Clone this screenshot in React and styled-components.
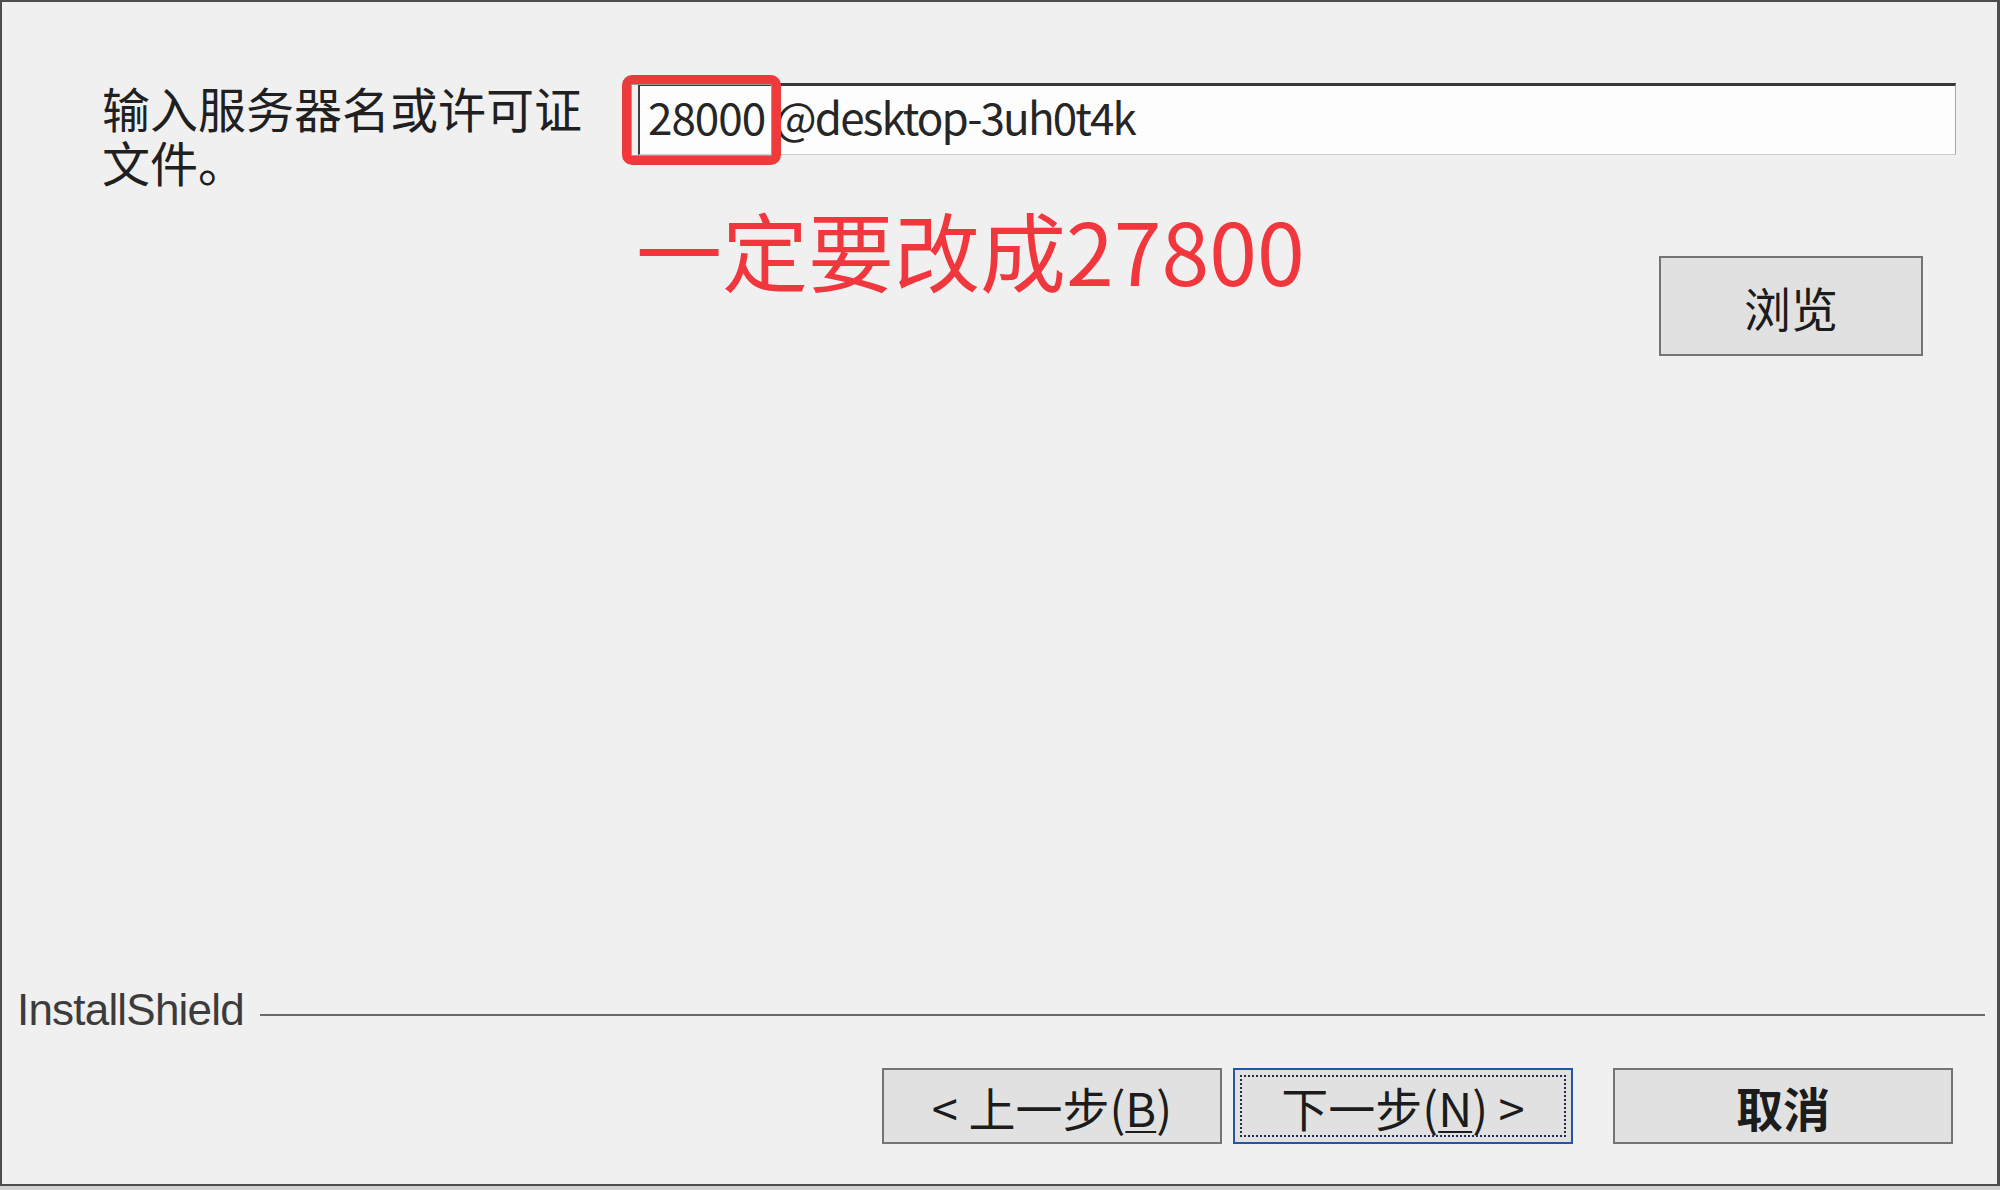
import React from "react";
import styled, { createGlobalStyle } from "styled-components";

const GlobalStyle = createGlobalStyle`
  html, body {
    margin: 0;
    padding: 0;
    background: #d2d2d2;
  }
  body {
    font-family: "Noto Sans CJK SC", "Noto Sans", sans-serif;
    color: #1f1f1f;
  }
`;

export default function App() {
  return (
    <>
      <GlobalStyle />
      <Dialog>
        <Body>
          <FieldRow>
            <Label>输入服务器名或许可证文件。</Label>
            <FieldColumn>
              <Field>
                <Highlight />
                <FieldText>28000</FieldText>
                <FieldText $after>@desktop-3uh0t4k</FieldText>
              </Field>
              <NoteRow>
                <Note>一定要改成27800</Note>
                <Button $width={264} $height={100} $top={101} $right={33}>
                  浏览
                </Button>
              </NoteRow>
            </FieldColumn>
          </FieldRow>
        </Body>

        <Footer>
          <Brand>
            <BrandName>InstallShield</BrandName>
            <Rule />
          </Brand>
          <Actions>
            <Button>
              &lt; 上一步(<u>B</u>)
            </Button>
            <Button $gap={11} $primary>
              下一步(<u>N</u>) &gt;
            </Button>
            <Button $gap={40} $bold>
              取消
            </Button>
          </Actions>
        </Footer>
      </Dialog>
    </>
  );
}

const Dialog = styled.div`
  box-sizing: border-box;
  width: 2000px;
  height: 1186px;
  border: 2px solid #4d4d4d;
  border-right-width: 3px;
  background: #f0f0f0;
  display: flex;
  flex-direction: column;
`;

const Body = styled.div`
  flex: 1;
  padding: 78px 41px 0 100px;
`;

const FieldRow = styled.div`
  display: flex;
  align-items: flex-start;
`;

const Label = styled.div`
  width: 500px;
  margin-right: 36px;
  font-size: 48px;
  line-height: 54px;
  color: #202020;
`;

const FieldColumn = styled.div`
  flex: 1;
  display: flex;
  flex-direction: column;
`;

const Field = styled.div`
  position: relative;
  box-sizing: border-box;
  height: 72px;
  margin-top: 3px;
  display: flex;
  align-items: center;
  padding: 0 0 8px 8px;
  background: #fdfdfd;
  border-top: 3px solid #383838;
  border-left: 2px solid #3e3e3e;
  border-right: 1px solid #a8a8a8;
  border-bottom: 1px solid #cdcdcd;
`;

const FieldText = styled.span`
  margin-left: ${({ $after }) => ($after ? "10px" : "0")};
  font-size: 44px;
  line-height: 1;
  letter-spacing: ${({ $after }) => ($after ? "-1.9px" : "-1px")};
  color: #262626;
`;

const Highlight = styled.div`
  position: absolute;
  left: -18px;
  top: -11px;
  width: 159px;
  height: 90px;
  box-sizing: border-box;
  border: 9px solid #ee3a3a;
  border-radius: 10px;
  box-shadow: inset 0 0 0 1px #9c9c9c;
  pointer-events: none;
`;

const NoteRow = styled.div`
  display: flex;
  justify-content: space-between;
  align-items: flex-start;
`;

const Note = styled.div`
  margin-top: 51px;
  margin-left: -2px;
  font-size: 86px;
  line-height: 1;
  color: #f0373d;
`;

const Button = styled.div`
  box-sizing: border-box;
  position: relative;
  width: ${({ $width }) => $width || 340}px;
  height: ${({ $height }) => $height || 76}px;
  margin-top: ${({ $top }) => $top || 0}px;
  margin-right: ${({ $right }) => $right || 0}px;
  margin-left: ${({ $gap }) => $gap || 0}px;
  display: flex;
  align-items: center;
  justify-content: center;
  background: #e1e1e1;
  border: 2px solid ${({ $primary }) => ($primary ? "#2456a4" : "#747474")};
  font-size: 47px;
  font-weight: ${({ $bold }) => ($bold ? 700 : 400)};
  line-height: 1;
  color: #1c1c1c;

  u {
    text-decoration-thickness: 2px;
    text-underline-offset: 4px;
  }

  &::after {
    content: "";
    display: ${({ $primary }) => ($primary ? "block" : "none")};
    position: absolute;
    inset: 5px;
    border: 2px dotted #1f2c48;
  }
`;

const Footer = styled.div`
  padding: 0 12px 40px 15px;
`;

const Brand = styled.div`
  display: flex;
  align-items: center;
  height: 44px;
`;

const BrandName = styled.span`
  font-family: "Liberation Sans", Arial, sans-serif;
  font-size: 44px;
  line-height: 44px;
  letter-spacing: -0.8px;
  color: #3c3c3c;
`;

const Rule = styled.div`
  flex: 1;
  height: 2px;
  margin: 10px 0 0 16px;
  background: #6a6a6a;
`;

const Actions = styled.div`
  display: flex;
  justify-content: flex-end;
  margin-top: 36px;
  padding-right: 32px;
`;
